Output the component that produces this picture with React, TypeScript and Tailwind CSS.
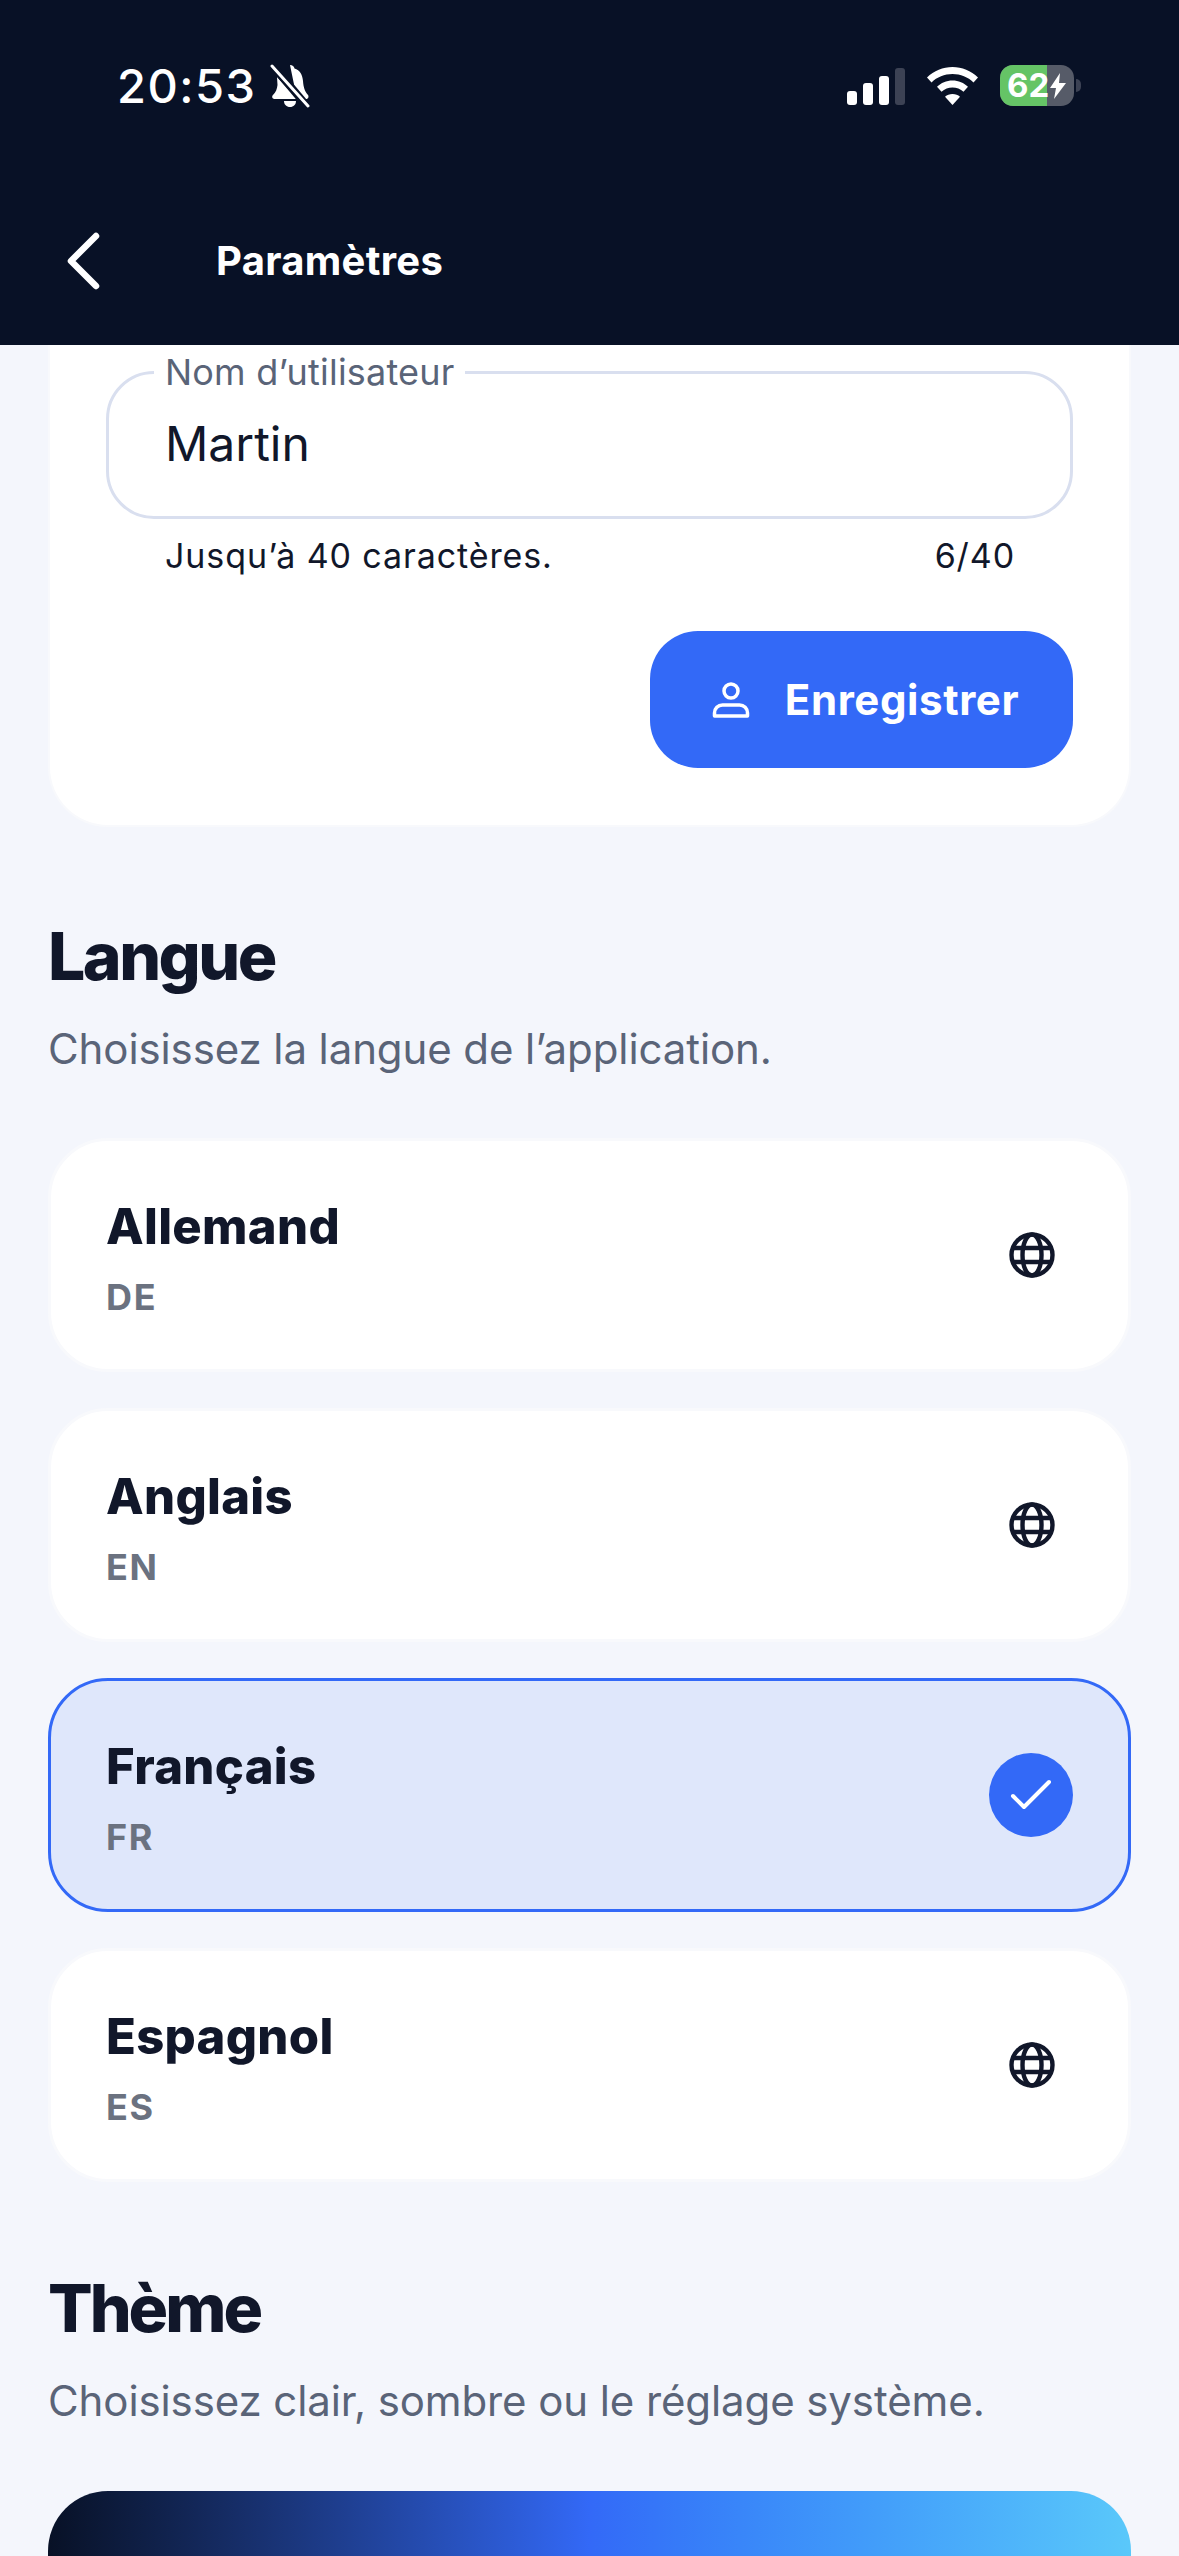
const ink = "text-[#11172a]";

function Globe() {
  return (
    <svg width="46" height="46" viewBox="0 0 46 46" fill="none" stroke="#11172a" strokeWidth="4.4" className="shrink-0">
      <circle cx="23" cy="23" r="20.5" />
      <ellipse cx="23" cy="23" rx="9.5" ry="20.5" />
      <path d="M4.5 16h37M4.5 30h37" />
    </svg>
  );
}

function LanguageRow({ name, code, selected }: { name: string; code: string; selected?: boolean }) {
  return (
    <div
      className={
        selected
          ? "h-[234px] rounded-[60px] border-[3px] border-[#3369f7] bg-[#dfe7fb] pl-[55px] pr-[55px] flex items-center justify-between"
          : "h-[234px] rounded-[60px] border-[3px] border-[#f8f9fc] bg-white pl-[55px] pr-[73px] flex items-center justify-between"
      }
    >
      <div className="flex flex-col gap-[20px] mt-[5px]">
        <div className={`text-[49px] leading-[58px] font-extrabold tracking-[0.3px] ${ink}`}>{name}</div>
        <div className="text-[36px] leading-[42px] font-bold tracking-[1.7px] text-[#6b7280]">{code}</div>
      </div>
      {selected ? (
        <div className="w-[84px] h-[84px] rounded-full bg-[#3369f7] flex items-center justify-center">
          <svg width="42" height="42" viewBox="0 0 42 42" fill="none" stroke="white" strokeWidth="4" strokeLinecap="round" strokeLinejoin="round">
            <path d="M3 22l11 11L39 8" />
          </svg>
        </div>
      ) : (
        <Globe />
      )}
    </div>
  );
}

function StatusBar() {
  return (
    <div className="h-[208px] pl-[117px] pr-[98px] pt-[60px] flex justify-between items-start">
      <div className="flex items-center gap-[13px] h-[52px]">
        <span className="text-[47px] leading-[52px] font-medium text-white tracking-[1.5px]">20:53</span>
        <svg width="40" height="44" viewBox="0 0 40 44" fill="white">
          <path d="M20 1c2.500 0 4 1.500 4.500 3.500C30 6 32.500 11 33 17c.5 6 1.500 10 5 14 1 1.500.5 4-2 4H5c-3 0-3.500-2.500-2-4 3-3 4-6 4.500-10L7 13 27 35z" fill="white" />
          <path d="M4 3l32 38" stroke="#081126" strokeWidth="8" />
          <path d="M2 2l36 40" stroke="white" strokeWidth="3" strokeLinecap="round" />
          <path d="M14 37h12c0 3.500-2.500 6-6 6s-6-2.500-6-6z" />
        </svg>
      </div>
      <div className="flex items-center gap-[22px] pt-[8px] -mt-[3px]">
        <div className="flex items-end gap-[6px] h-[38px]">
          <div className="w-[10px] h-[14px] rounded-[3px] bg-white" />
          <div className="w-[10px] h-[22px] rounded-[3px] bg-white" />
          <div className="w-[10px] h-[29px] rounded-[3px] bg-white" />
          <div className="w-[10px] h-[37px] rounded-[3px] bg-[#3c4254]" />
        </div>
        <svg width="51" height="38" viewBox="0 0 51 38" fill="white">
          <path d="M25.500 0C35 0 44 3.800 51 10.500l-4.500 5C41 10 33.500 7 25.500 7S10 10 4.500 15.500L0 10.500C7 3.800 16 0 25.500 0z" />
          <path d="M25.500 13.500c6 0 11.500 2.300 15.500 6.300l-4.500 5C33.500 22 29.500 20.500 25.500 20.500S17.500 22 14.500 24.800L10 19.800c4-4 9.500-6.300 15.500-6.300z" />
          <path d="M25.500 27c3 0 5.500 1 7.500 2.800L25.500 38 18 29.800C20 28 22.500 27 25.500 27z" />
        </svg>
        <div className="flex items-center gap-[2px]">
          <div className="w-[74px] h-[41px] rounded-[13px] overflow-hidden bg-[#565b68] relative flex">
            <div className="w-[47px] h-full bg-[#65c466]" />
            <span className="absolute left-[7px] top-0 text-[33px] leading-[41px] font-bold text-white">62</span>
            <svg className="absolute left-[50px] top-[8px]" width="16" height="26" viewBox="0 0 16 26" fill="white">
              <path d="M10 0L0 15h6l-2 11 12-16H9z" />
            </svg>
          </div>
          <div className="w-[5px] h-[13px] rounded-r-[5px] bg-[#3c4254]" />
        </div>
      </div>
    </div>
  );
}

export default function App() {
  return (
    <div className="w-[1179px] h-[2556px] overflow-hidden bg-[#f4f6fc] font-['Inter',sans-serif]">
      <header className="h-[345px] bg-[#081126]">
        <StatusBar />
        <div className="flex items-center h-[108px] pl-[65px] -mt-[1px]">
          <svg width="36" height="60" viewBox="0 0 36 60" fill="none" stroke="white" strokeWidth="6.500" strokeLinecap="round" strokeLinejoin="round">
            <path d="M31 5L6 30l25 25" />
          </svg>
          <h1 className="ml-[115px] text-[40px] leading-[48px] font-bold tracking-[0.3px] text-white">Paramètres</h1>
        </div>
      </header>

      <main className="px-[48px]">
        <section className="bg-white rounded-b-[60px] h-[482px] pt-[26px] px-[56px] border-x-[2px] border-b-[2px] border-[#f8f9fc]">
          <div className="relative h-[148px] rounded-[48px] border-[3px] border-[#d9dfef] pl-[56px] pt-[41px]">
            <span className="absolute left-[45px] -top-[24px] bg-white px-[11px] text-[36px] leading-[44px] tracking-[0.2px] text-[#5a6478]">
              Nom d’utilisateur
            </span>
            <span className={`text-[48px] leading-[58px] ${ink}`}>Martin</span>
          </div>
          <div className={`flex justify-between pl-[59px] pr-[58px] mt-[16px] text-[34px] leading-[42px] tracking-[0.9px] ${ink}`}>
            <span>Jusqu’à 40 caractères.</span>
            <span>6/40</span>
          </div>
          <div className="flex justify-end mt-[54px]">
            <button className="w-[423px] h-[137px] rounded-[48px] bg-[#3369f7] flex items-center justify-center gap-[35px] pl-[8px] text-white">
              <svg width="38" height="36" viewBox="0 0 38 36" fill="none" stroke="white" strokeWidth="3.500">
                <circle cx="19" cy="9" r="7" />
                <path d="M2.500 34v-3c0-4.500 3.500-8 8-8h17c4.500 0 8 3.500 8 8v3z" strokeLinejoin="round" />
              </svg>
              <span className="text-[42px] leading-[50px] font-bold tracking-[0.6px]">Enregistrer</span>
            </button>
          </div>
        </section>

        <h2 className={`mt-[91px] text-[66px] leading-[76px] font-extrabold tracking-[-2.500px] ${ink}`}>Langue</h2>
        <p className="mt-[31px] text-[42px] leading-[48px] tracking-[-0.1px] text-[#5a6478]">Choisissez la langue de l’application.</p>

        <div className="mt-[65px] flex flex-col gap-[36px]">
          <LanguageRow name="Allemand" code="DE" />
          <LanguageRow name="Anglais" code="EN" />
          <LanguageRow name="Français" code="FR" selected />
          <LanguageRow name="Espagnol" code="ES" />
        </div>

        <h2 className={`mt-[88px] text-[66px] leading-[76px] font-extrabold tracking-[-3px] ${ink}`}>Thème</h2>
        <p className="mt-[31px] text-[42px] leading-[48px] tracking-[-0.1px] text-[#5a6478]">Choisissez clair, sombre ou le réglage système.</p>

        <div className="mt-[66px] h-[200px] rounded-[60px] bg-linear-to-r from-[#081126] via-[#3369f7] to-[#5ac8fa]" />
      </main>
    </div>
  );
}
